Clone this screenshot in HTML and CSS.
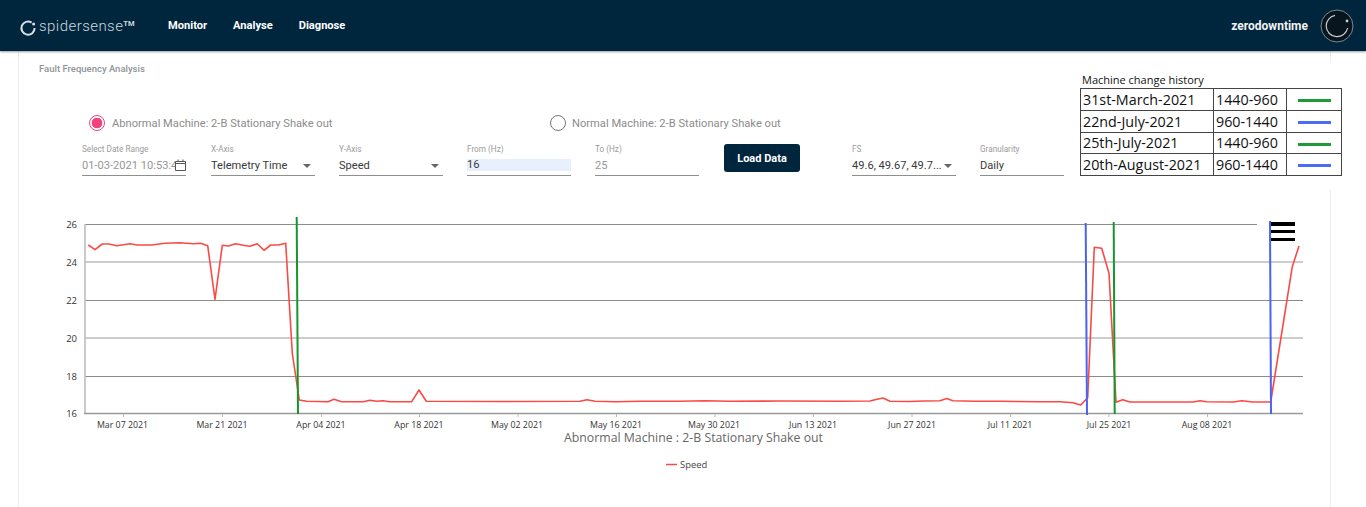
FILE: index.html
```html
<!DOCTYPE html>
<html lang="en">
<head>
<meta charset="utf-8">
<title>Fault Frequency Analysis</title>
<link rel="stylesheet" href="styles.css">
</head>
<body>
<header class="topbar">
  <div class="brand">
    <svg class="brand-icon" width="18" height="18" viewBox="0 0 18 18"><path d="M12.6 3.6A6.6 6.6 0 1 0 15.6 9" fill="none" stroke="#d9dee2" stroke-width="2"/><circle cx="14.6" cy="5" r="1.5" fill="#d9dee2"/></svg>
    <span class="brand-name">spidersense<sup class="brand-tm">TM</sup></span>
  </div>
  <nav class="nav">
    <a class="nav-link">Monitor</a>
    <a class="nav-link">Analyse</a>
    <a class="nav-link">Diagnose</a>
  </nav>
  <div class="account">
    <span class="account-name">zerodowntime</span>
    <svg class="avatar" width="34" height="34" viewBox="0 0 34 34"><circle cx="17" cy="17" r="16" fill="#07151f" stroke="#7f888e" stroke-width="1"/><path d="M15 6.3A10.8 10.8 0 1 0 27.6 19" fill="none" stroke="#c9cdd0" stroke-width="1.2"/><circle cx="27" cy="12" r="1.4" fill="#c9cdd0"/></svg>
  </div>
</header>

<main class="card">
  <h1 class="page-title">Fault Frequency Analysis</h1>

  <div class="radios">
    <label class="radio-option"><span class="radio radio-on"></span>Abnormal Machine: 2-B Stationary Shake out</label>
    <label class="radio-option"><span class="radio"></span>Normal Machine: 2-B Stationary Shake out</label>
  </div>

  <div class="fields">
    <div class="field field-date">
      <span class="field-label">Select Date Range</span>
      <span class="field-value muted"><span class="clip">01-03-2021 10:53:48</span>
        <svg class="calendar" width="11" height="12" viewBox="0 0 11 12"><path d="M.5 2.5h10v9H.5zM.5 4.5h10M3 .5v2M8 .5v2" fill="none" stroke="#555" stroke-width="1"/></svg>
      </span>
    </div>
    <div class="field">
      <span class="field-label">X-Axis</span>
      <span class="field-value">Telemetry Time<span class="caret"></span></span>
    </div>
    <div class="field">
      <span class="field-label">Y-Axis</span>
      <span class="field-value">Speed<span class="caret"></span></span>
    </div>
    <div class="field">
      <span class="field-label">From (Hz)</span>
      <span class="field-value"><span class="autofill">16</span></span>
    </div>
    <div class="field">
      <span class="field-label">To (Hz)</span>
      <span class="field-value muted">25</span>
    </div>
    <button class="load-btn">Load Data</button>
    <div class="field">
      <span class="field-label">FS</span>
      <span class="field-value">49.6, 49.67, 49.7...<span class="caret caret-near"></span></span>
    </div>
    <div class="field field-wide">
      <span class="field-label">Granularity</span>
      <span class="field-value">Daily</span>
    </div>
  </div>

  <section class="chart">
    <svg class="chart-svg" width="1311" height="317" viewBox="19 190 1311 317">
      <g class="grid-dark">
        <line x1="85" x2="1257" y1="224.5" y2="224.5"/>
        <line x1="85" x2="1303" y1="300.5" y2="300.5"/>
        <line x1="85" x2="1303" y1="376.5" y2="376.5"/>
      </g>
      <g class="grid-light">
        <line x1="85" x2="1303" y1="262" y2="262"/>
        <line x1="85" x2="1303" y1="338" y2="338"/>
        <line x1="85" x2="85" y1="224" y2="414"/>
      </g>
      <line class="axis" x1="84" x2="1303" y1="413.5" y2="413.5"/>
      <g class="ticks">
        <line x1="123.5" x2="123.5" y1="414" y2="417"/><line x1="222.5" x2="222.5" y1="414" y2="417"/><line x1="321.5" x2="321.5" y1="414" y2="417"/><line x1="419.5" x2="419.5" y1="414" y2="417"/><line x1="518" x2="518" y1="414" y2="417"/><line x1="616.5" x2="616.5" y1="414" y2="417"/><line x1="715" x2="715" y1="414" y2="417"/><line x1="813.5" x2="813.5" y1="414" y2="417"/><line x1="912" x2="912" y1="414" y2="417"/><line x1="1010.5" x2="1010.5" y1="414" y2="417"/><line x1="1109" x2="1109" y1="414" y2="417"/><line x1="1207.5" x2="1207.5" y1="414" y2="417"/>
      </g>
      <g class="y-labels">
        <text x="77" y="228">26</text><text x="77" y="266">24</text><text x="77" y="304">22</text><text x="77" y="342">20</text><text x="77" y="380">18</text><text x="77" y="417">16</text>
      </g>
      <g class="x-labels">
        <text x="122.5" y="428">Mar 07 2021</text><text x="222" y="428">Mar 21 2021</text><text x="321" y="428">Apr 04 2021</text><text x="419" y="428">Apr 18 2021</text><text x="517" y="428">May 02 2021</text><text x="616" y="428">May 16 2021</text><text x="714" y="428">May 30 2021</text><text x="813" y="428">Jun 13 2021</text><text x="912" y="428">Jun 27 2021</text><text x="1010" y="428">Jul 11 2021</text><text x="1109" y="428">Jul 25 2021</text><text x="1207" y="428">Aug 08 2021</text>
      </g>
      <polyline class="series" points="88.3,245 95,249.7 102.3,244 109,244 116.7,245.7 130,243.7 137.3,245 151.7,245 165,243.3 180,242.7 193.3,243.7 200.7,243.3 207.7,245.7 215,299.3 222.3,245.3 228.3,246 235.7,243.7 243.3,245.3 250,246.3 257.3,243.7 264,250.3 270.7,245 278.3,245 285.7,243.3 292.3,353.3 299.3,400 306.7,401.3 328,401.7 334,399.3 341.7,401.7 363,401.7 370,400.3 376.7,401.3 383,400.7 390,401.7 411.7,401.7 419,390 426.3,401.3 500,401.5 580,401.3 587,399.8 595,401.2 616,401.7 640,401.3 680,401.3 705,400.8 730,401.3 780,401 840,401.2 870,401 876,399.5 883,398 890,401.3 910,401.5 925,401 940,400.8 946.7,398.5 953,400.8 975,401.3 1000,401.3 1040,401.7 1060,401.7 1073,402.7 1080.7,405 1087.7,397.7 1094.3,247.3 1101.7,248.3 1109,273.3 1116,402.3 1122.7,399.7 1130,402 1193,402 1200,400.7 1206.7,401.7 1233,402 1241.7,400.7 1253,402 1270.7,402 1292.3,266.7 1299,246"/>
      <line class="marker-green" x1="296.7" x2="298" y1="217" y2="414"/>
      <line class="marker-blue" x1="1085.7" x2="1087" y1="223" y2="415"/>
      <line class="marker-green" x1="1113.7" x2="1114.7" y1="222" y2="414"/>
      <line class="marker-blue" x1="1270" x2="1271" y1="221" y2="414"/>
      <text class="chart-title" x="693.5" y="442">Abnormal Machine : 2-B Stationary Shake out</text>
      <line class="legend-line" x1="666" x2="677" y1="464.5" y2="464.5"/>
      <text class="legend-text" x="680" y="468">Speed</text>
    </svg>
    <button class="menu-btn" aria-label="Chart menu"><span></span><span></span><span></span></button>
  </section>

  <aside class="history">
    <div class="history-title">Machine change history</div>
    <table class="history-table">
      <tr><td class="c-date">31st-March-2021</td><td class="c-range">1440-960</td><td class="c-line"><span class="swatch swatch-green"></span></td></tr>
      <tr><td class="c-date">22nd-July-2021</td><td class="c-range">960-1440</td><td class="c-line"><span class="swatch swatch-blue"></span></td></tr>
      <tr><td class="c-date">25th-July-2021</td><td class="c-range">1440-960</td><td class="c-line"><span class="swatch swatch-green"></span></td></tr>
      <tr><td class="c-date">20th-August-2021</td><td class="c-range">960-1440</td><td class="c-line"><span class="swatch swatch-blue"></span></td></tr>
    </table>
  </aside>
</main>
</body>
</html>
```
FILE: styles.css
```css
* { box-sizing: border-box; }
html, body { margin: 0; height: 507px; overflow: hidden; background: #fff; }
body { font-family: Roboto, "Liberation Sans", sans-serif; color: #333; }

.topbar {
  height: 51px;
  background: #00263e;
  display: flex;
  align-items: center;
  padding: 0 12px 0 19px;
  box-shadow: 0 1px 2px rgba(0,0,0,.4);
  position: relative;
  z-index: 2;
}
.brand { display: flex; align-items: center; width: 149px; }
.brand-icon { margin-top: 4px; flex: none; }
.brand-name { font-size: 15px; font-weight: 300; letter-spacing: .45px; color: #cfd6db; margin-left: 2px; }
.brand-tm { font-size: 7.5px; font-weight: 700; vertical-align: 5px; line-height: 0; letter-spacing: 0; }
.nav { display: flex; gap: 26px; }
.nav-link { color: #fff; font-size: 11.1px; font-weight: 700; }
.account { margin-left: auto; display: flex; align-items: center; gap: 12px; }
.account-name { color: #f2f2f2; font-size: 12px; font-weight: 700; }
.avatar { display: block; }

.card {
  position: relative;
  margin: 0 35px 0 18px;
  height: 456px;
  border-left: 1px solid #ececec;
  border-right: 1px solid #ececec;
  padding-top: 12px;
}
.page-title { margin: 0 0 0 20px; font-size: 9.5px; line-height: 12px; font-weight: 500; color: #8f9499; }

.radios { display: flex; margin: 38px 0 0 70px; height: 20px; }
.radio-option { display: flex; align-items: center; gap: 7px; font-size: 11.15px; color: #8c8c8c; }
.radio-option:first-child { width: 461px; }
.radio-option:last-child { gap: 6px; }
.radio { width: 16px; height: 16px; border-radius: 50%; border: 1px solid #777; flex: none; }
.radio-on { border: 1.5px solid #f4407c; background: radial-gradient(circle, #f4407c 0 5px, #fff 5.6px); }

.fields { display: flex; gap: 24px; margin: 11px 0 0 63px; height: 32px; }
.field { width: 104px; display: flex; flex-direction: column; border-bottom: 1px solid #8f8f8f; height: 32px; }
.field-date { margin-right: 1px; }
.field-wide { width: 84px; }
.field-label { font-size: 8.2px; line-height: 10px; color: #9b9b9b; }
.field-value { position: relative; display: flex; align-items: center; font-size: 11.1px; line-height: 14px; margin-top: 5px; color: #3a3a3a; }
.muted { color: #969696; }
.clip { width: 94px; overflow: hidden; white-space: nowrap; }
.calendar { flex: none; margin-top: -3px; }
.autofill { background: #e8f0fe; width: 100%; height: 12px; line-height: 12px; }
.caret { position: absolute; right: 4px; top: 5px; border: 4px solid transparent; border-top: 4px solid #666; border-bottom: 0; }
.caret-near { right: 4px; }

.load-btn {
  width: 76px;
  height: 28px;
  margin: 0 28px 0 1px;
  border: 0;
  border-radius: 3px;
  background: #00263e;
  color: #fff;
  font: 700 11px Roboto, sans-serif;
}

.chart { position: relative; margin-top: 14px; height: 317px; }
.chart-svg { display: block; }
.grid-dark line { stroke: #8c8c8c; stroke-width: 1; }
.grid-light line { stroke: #bdbdbd; stroke-width: 1.6; }
.axis { stroke: #9a9a9a; stroke-width: 1.5; }
.ticks line { stroke: #bbb; stroke-width: 1; }
.y-labels text { font: 9.5px "Open Sans", sans-serif; fill: #333; text-anchor: end; }
.x-labels text { font: 8.8px "Open Sans", sans-serif; fill: #333; text-anchor: middle; }
.series { fill: none; stroke: #fb4a45; stroke-width: 1.6; stroke-linejoin: round; }
.marker-green { stroke: #17962d; stroke-width: 2; }
.marker-blue { stroke: #4a63f2; stroke-width: 2; }
.chart-title { font: 12.3px "Open Sans", sans-serif; fill: #666; text-anchor: middle; }
.legend-line { stroke: #f44a45; stroke-width: 1.5; }
.legend-text { font: 9.4px "Open Sans", sans-serif; fill: #444; }

.menu-btn {
  position: absolute;
  left: 1252px;
  top: 32px;
  width: 24px;
  height: 19px;
  padding: 0;
  border: 0;
  background: none;
  display: flex;
  flex-direction: column;
  justify-content: space-between;
}
.menu-btn span { display: block; height: 3.5px; background: #000; }

.history {
  position: absolute;
  left: 1045px;
  top: 12px;
  width: 301px;
  height: 127px;
  padding: 10px 0 0 16px;
  background: #fff;
}
.history-title { font: 11px/13px "Open Sans", sans-serif; color: #111; margin: 0 0 2px 2px; }
.history-table { border-collapse: collapse; width: 262px; table-layout: fixed; background: #fff; }
.history-table td { border: 1px solid #444; height: 21.8px; padding: 1px 0 0 2px; font: 14.3px/1 "Open Sans", sans-serif; color: #111; white-space: nowrap; }
.c-date { width: 133px; }
.c-range { width: 73px; }
.history-table .c-line { text-align: center; padding: 0; }
.swatch { display: inline-block; width: 33px; height: 3px; vertical-align: middle; }
.swatch-green { background: #1e9b32; }
.swatch-blue { background: #4d6bf5; }
```
